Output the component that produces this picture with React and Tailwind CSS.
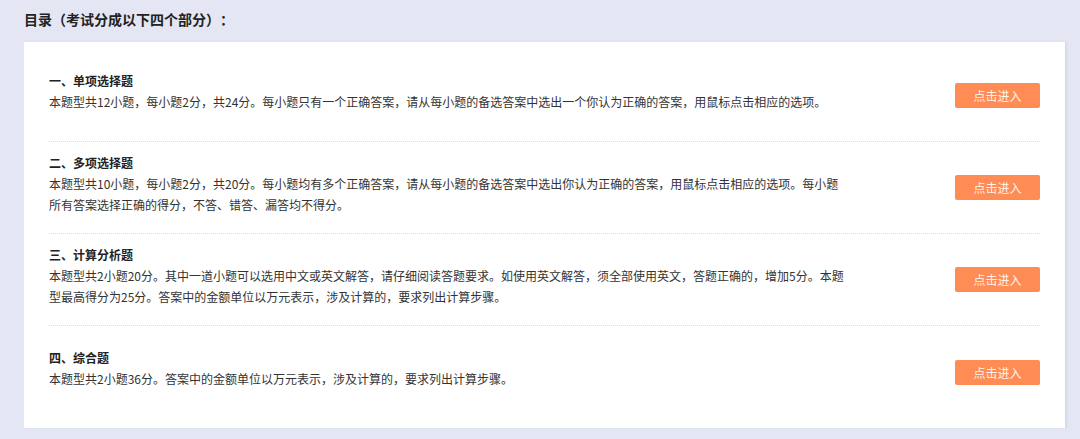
const sections = [
  {
    title: '一、单项选择题',
    desc: '本题型共12小题，每小题2分，共24分。每小题只有一个正确答案，请从每小题的备选答案中选出一个你认为正确的答案，用鼠标点击相应的选项。',
  },
  {
    title: '二、多项选择题',
    desc: '本题型共10小题，每小题2分，共20分。每小题均有多个正确答案，请从每小题的备选答案中选出你认为正确的答案，用鼠标点击相应的选项。每小题所有答案选择正确的得分，不答、错答、漏答均不得分。',
  },
  {
    title: '三、计算分析题',
    desc: '本题型共2小题20分。其中一道小题可以选用中文或英文解答，请仔细阅读答题要求。如使用英文解答，须全部使用英文，答题正确的，增加5分。本题型最高得分为25分。答案中的金额单位以万元表示，涉及计算的，要求列出计算步骤。',
  },
  {
    title: '四、综合题',
    desc: '本题型共2小题36分。答案中的金额单位以万元表示，涉及计算的，要求列出计算步骤。',
  },
];

export default function App() {
  return (
    <div
      className="w-[1080px] h-[439px] bg-[#e4e7f3] px-6 pt-[9px] overflow-hidden [text-spacing-trim:space-all]"
      style={{ fontFamily: '"Noto Sans CJK SC", "Noto Sans", sans-serif' }}
    >
      <h1 className="text-[14px] leading-[20px] font-bold text-[#222] mb-[13px]">
        目录（考试分成以下四个部分）：
      </h1>

      <div className="bg-white w-[1041px] px-[25px] pt-2 pb-[10px] shadow-[2px_0_2px_rgba(180,185,210,0.35)]">
        {sections.map((s, i) => (
          <div
            key={s.title}
            className={`flex items-center justify-between h-[92px] ${
              i < sections.length - 1 ? 'border-b border-dotted border-[#dcdcdc]' : ''
            }`}
          >
            <div className="w-[796px] pb-[9px] text-[12px] leading-[21px]">
              <div className="font-bold text-[#222]">{s.title}</div>
              <p className="text-[#333]">{s.desc}</p>
            </div>
            <button className="w-[85px] h-[25px] rounded-[2px] bg-[#ff8c55] text-[#fff3ea] text-[12px] leading-[25px] text-center">
              点击进入
            </button>
          </div>
        ))}
      </div>
    </div>
  );
}
